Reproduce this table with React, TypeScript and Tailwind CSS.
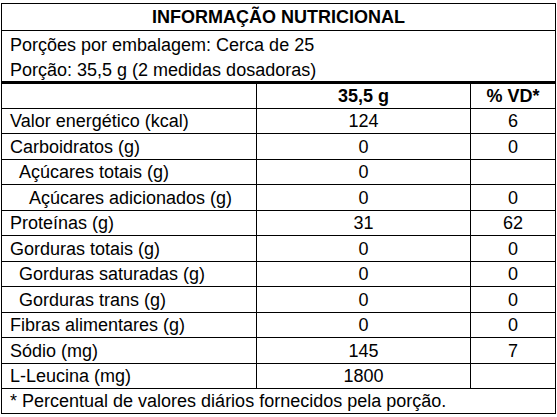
import React from "react";

type Row = { label: string; indent: number; v: string; vd: string; h: number };

const rows: Row[] = [
  { label: "Valor energético (kcal)", indent: 0, v: "124", vd: "6", h: 25 },
  { label: "Carboidratos (g)", indent: 0, v: "0", vd: "0", h: 26 },
  { label: "Açúcares totais (g)", indent: 1, v: "0", vd: "", h: 25 },
  { label: "Açúcares adicionados (g)", indent: 2, v: "0", vd: "0", h: 26 },
  { label: "Proteínas (g)", indent: 0, v: "31", vd: "62", h: 25 },
  { label: "Gorduras totais (g)", indent: 0, v: "0", vd: "0", h: 26 },
  { label: "Gorduras saturadas (g)", indent: 1, v: "0", vd: "0", h: 25 },
  { label: "Gorduras trans (g)", indent: 1, v: "0", vd: "0", h: 26 },
  { label: "Fibras alimentares (g)", indent: 0, v: "0", vd: "0", h: 25 },
  { label: "Sódio (mg)", indent: 0, v: "145", vd: "7", h: 26 },
  { label: "L-Leucina (mg)", indent: 0, v: "1800", vd: "", h: 25 },
];

export default function App() {
  return (
    <div
      className="w-[557px] h-[417px] bg-white text-black pt-[3px] pl-[1px]"
      style={{ fontFamily: '"Liberation Sans", Arial, sans-serif' }}
    >
      <div className="w-[555px] border border-black text-[18px] leading-none">
        <div className="h-[27px] border-b border-black flex items-center justify-center font-bold">
          INFORMAÇÃO NUTRICIONAL
        </div>
        <div className="h-[53px] border-b-[3px] border-black pl-[8px] pt-[2px]">
          <div className="leading-[25px]">Porções por embalagem: Cerca de 25</div>
          <div className="leading-[25px]">Porção: 35,5 g (2 medidas dosadoras)</div>
        </div>
        <div className="grid grid-cols-[254px_214px_1fr] h-[25px] border-b border-black font-bold">
          <div />
          <div className="border-l border-black flex items-center justify-center">35,5 g</div>
          <div className="border-l border-black flex items-center justify-center">% VD*</div>
        </div>
        {rows.map((r, i) => (
          <div
            key={i}
            className="grid grid-cols-[254px_214px_1fr] border-b border-black"
            style={{ height: r.h }}
          >
            <div
              className={
                "flex items-center " +
                (r.indent === 0 ? "pl-[8px]" : r.indent === 1 ? "pl-[17px]" : "pl-[27px]")
              }
            >
              {r.label}
            </div>
            <div className="border-l border-black flex items-center justify-center">{r.v}</div>
            <div className="border-l border-black flex items-center justify-center">{r.vd}</div>
          </div>
        ))}
        <div className="h-[24px] flex items-center pl-[8px]">
          * Percentual de valores diários fornecidos pela porção.
        </div>
      </div>
    </div>
  );
}
